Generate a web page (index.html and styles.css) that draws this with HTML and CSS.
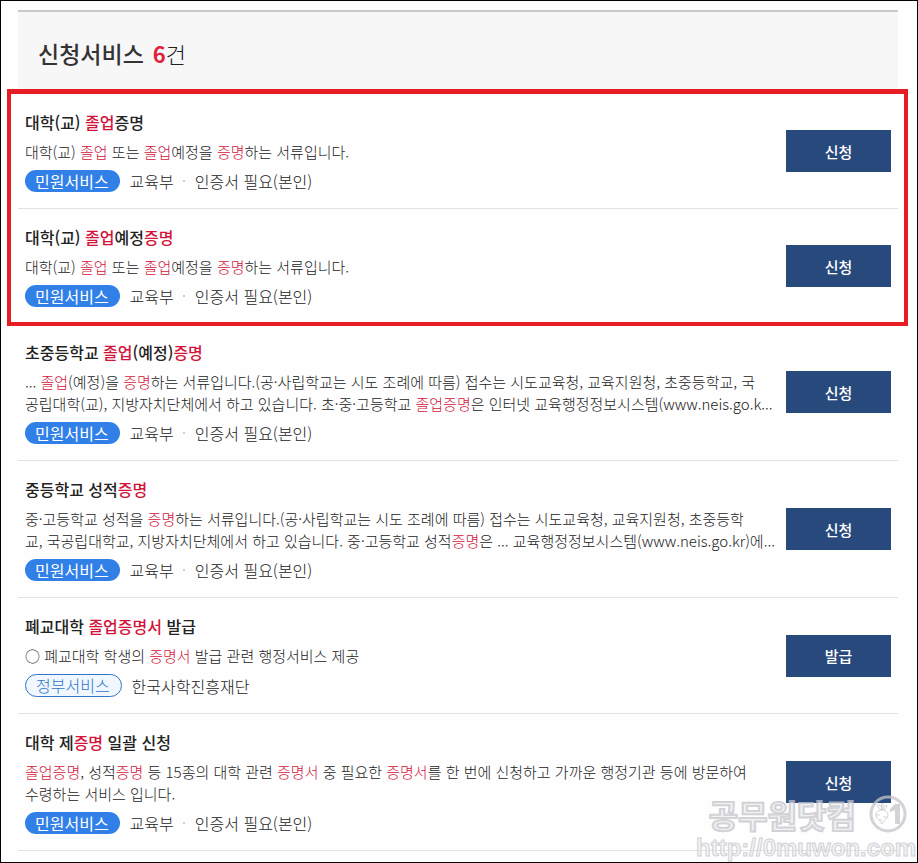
FILE: index.html
```
<!DOCTYPE html>
<html lang="ko">
<head>
    <meta charset="UTF-8">
    <title>신청서비스</title>
    <link rel="stylesheet" href="styles.css">
</head>
<body>
    <main class="service-list">
        <header class="list-header">
            <h1>신청서비스</h1>
            <p class="count"><em>6</em>건</p>
        </header>

        <div class="highlight">
            <section class="service">
                <div class="info">
                    <h2>대학(교) <mark>졸업</mark>증명</h2>
                    <p class="desc">대학(교) <mark>졸업</mark> 또는 <mark>졸업</mark>예정을 <mark>증명</mark>하는 서류입니다.</p>
                    <div class="meta">
                        <span class="badge">민원서비스</span>
                        <span>교육부</span><i class="dot"></i><span>인증서 필요(본인)</span>
                    </div>
                </div>
                <button type="button">신청</button>
            </section>
            <section class="service">
                <div class="info">
                    <h2>대학(교) <mark>졸업</mark>예정<mark>증명</mark></h2>
                    <p class="desc">대학(교) <mark>졸업</mark> 또는 <mark>졸업</mark>예정을 <mark>증명</mark>하는 서류입니다.</p>
                    <div class="meta">
                        <span class="badge">민원서비스</span>
                        <span>교육부</span><i class="dot"></i><span>인증서 필요(본인)</span>
                    </div>
                </div>
                <button type="button">신청</button>
            </section>
        </div>

        <section class="service">
            <div class="info">
                <h2>초중등학교 <mark>졸업</mark>(예정)<mark>증명</mark></h2>
                <p class="desc">... <mark>졸업</mark>(예정)을 <mark>증명</mark>하는 서류입니다.(공·사립학교는 시도 조례에 따름) 접수는 시도교육청, 교육지원청, 초중등학교, 국<br>공립대학(교), 지방자치단체에서 하고 있습니다. 초·중·고등학교 <mark>졸업증명</mark>은 인터넷 교육행정정보시스템(www.neis.go.k...</p>
                <div class="meta">
                    <span class="badge">민원서비스</span>
                    <span>교육부</span><i class="dot"></i><span>인증서 필요(본인)</span>
                </div>
            </div>
            <button type="button">신청</button>
        </section>
        <section class="service">
            <div class="info">
                <h2>중등학교 성적<mark>증명</mark></h2>
                <p class="desc">중·고등학교 성적을 <mark>증명</mark>하는 서류입니다.(공·사립학교는 시도 조례에 따름) 접수는 시도교육청, 교육지원청, 초중등학<br>교, 국공립대학교, 지방자치단체에서 하고 있습니다. 중·고등학교 성적<mark>증명</mark>은 ... 교육행정정보시스템(www.neis.go.kr)에...</p>
                <div class="meta">
                    <span class="badge">민원서비스</span>
                    <span>교육부</span><i class="dot"></i><span>인증서 필요(본인)</span>
                </div>
            </div>
            <button type="button">신청</button>
        </section>
        <section class="service">
            <div class="info">
                <h2>폐교대학 <mark>졸업증명서</mark> 발급</h2>
                <p class="desc">○ 폐교대학 학생의 <mark>증명서</mark> 발급 관련 행정서비스 제공</p>
                <div class="meta">
                    <span class="badge badge-gov">정부서비스</span>
                    <span>한국사학진흥재단</span>
                </div>
            </div>
            <button type="button">발급</button>
        </section>
        <section class="service">
            <div class="info">
                <h2>대학 제<mark>증명</mark> 일괄 신청</h2>
                <p class="desc"><mark>졸업증명</mark>, 성적<mark>증명</mark> 등 15종의 대학 관련 <mark>증명서</mark> 중 필요한 <mark>증명서</mark>를 한 번에 신청하고 가까운 행정기관 등에 방문하여<br>수령하는 서비스 입니다.</p>
                <div class="meta">
                    <span class="badge">민원서비스</span>
                    <span>교육부</span><i class="dot"></i><span>인증서 필요(본인)</span>
                </div>
            </div>
            <button type="button">신청</button>
        </section>
    </main>

    <div class="watermark">
        <div class="watermark-name">
            <span>공무원닷컴</span>
            <svg width="40" height="40" viewBox="0 0 40 40" fill="none" stroke="#c4c4cb">
                <circle cx="20" cy="20" r="17" stroke-width="3"/>
                <path d="M14 16c-4 0-7 3-6 6 1 3 4 4 6 8 2-4 5-5 6-8 0-4-3-6-6-6z" fill="#fff" stroke-width="1"/>
                <path d="M14 16c-3-1-5-3-4-5 3 0 4 2 4 5 0-3-1-5 0-7 2 2 1 5 0 7 1-3 3-5 5-4 0 2-2 3-5 4M8 21h4M15 23h4M11 26h3" stroke-width="1"/>
                <path d="M22 15l5-5h5v20h-5V16l-5 2z" fill="#c4c4cb" stroke="none"/>
            </svg>
        </div>
        <div class="watermark-url">http://0muwon.com</div>
    </div>
</body>
</html>
```
FILE: styles.css
```
* {
    box-sizing: border-box;
}
body {
    position: relative;
    margin: 0;
    min-height: 100vh;
    padding: 9px 19px 11px 17px;
    border: 1px solid #000;
    overflow-x: hidden;
    background: #fefefe;
    color: #222;
    font-family: "Noto Sans CJK KR", "Noto Sans", sans-serif;
}
h1, h2, p {
    margin: 0;
}
em, i {
    font-style: normal;
}
mark {
    background: none;
    color: #d3143a;
}
.list-header {
    display: flex;
    align-items: center;
    gap: 9px;
    height: 84px;
    padding: 0 20px;
    border-top: 2px solid #c9c9c9;
    background: #f7f7f7;
    line-height: 32px;
}
.list-header h1 {
    color: #333;
    font-size: 23px;
    font-weight: 500;
}
.count {
    font-size: 22px;
    font-weight: 300;
}
.count em {
    color: #e01f3d;
    font-weight: 700;
}
.highlight {
    position: relative;
}
/* red frame around the first two services */
.highlight::after {
    content: "";
    position: absolute;
    inset: -5px -10px -2px -11px;
    border: 4px solid #e81c24;
    border-top-width: 5px;
    pointer-events: none;
}
.service {
    display: flex;
    align-items: center;
    justify-content: space-between;
    padding: 16px 7px;
    border-bottom: 1px solid #e1e1e1;
}
.info {
    flex: 1;
    min-width: 0;
}
.service h2 {
    font-size: 16px;
    font-weight: 500;
    line-height: 24px;
}
.desc {
    margin: 7px 0;
    font-size: 15px;
    font-weight: 300;
    line-height: 22px;
    white-space: nowrap;
}
.meta {
    display: flex;
    align-items: center;
    font-size: 16px;
    font-weight: 300;
    line-height: 22px;
}
.badge {
    margin-right: 10px;
    padding: 0 11px 0 10px;
    border-radius: 12px;
    background: #3080e8;
    color: #fff;
    font-weight: 400;
}
.badge-gov {
    border: 1px solid #2f74c8;
    background: #f0f7ff;
    color: #2f74c8;
    font-weight: 300;
    line-height: 21px;
}
.dot {
    width: 2px;
    height: 2px;
    margin: 0 10px 0 9px;
    background: #ccc;
}
.service button {
    flex: none;
    width: 105px;
    height: 42px;
    padding: 0;
    border: 0;
    background: #28497c;
    color: #fff;
    font-family: inherit;
    font-size: 15px;
    font-weight: 500;
    cursor: pointer;
}
.watermark {
    position: absolute;
    right: 1px;
    bottom: 0;
    color: #eeeef0;
    font-weight: 700;
    opacity: 0.75;
    pointer-events: none;
    -webkit-text-stroke: 1px #c4c4cb;
}
.watermark-name {
    display: flex;
    align-items: center;
    justify-content: flex-end;
    gap: 12px;
    padding-right: 8px;
    font-size: 32px;
    line-height: 38px;
    -webkit-text-stroke: 2px #c4c4cb;
}
.watermark-url {
    font-family: "Liberation Sans", Arial, sans-serif;
    font-size: 24px;
    line-height: 28px;
}
```
